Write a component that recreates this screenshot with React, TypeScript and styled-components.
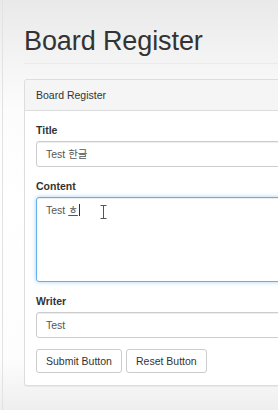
import React from "react";
import styled, { createGlobalStyle } from "styled-components";

const Global = createGlobalStyle`
  html, body { margin: 0; padding: 0; }
  body {
    width: 278px;
    height: 410px;
    overflow: hidden;
    font-family: "Liberation Sans", Arial, "Noto Sans CJK KR", sans-serif;
    color: #333;
    background: linear-gradient(to bottom, #e9e9e9 0px, #f4f4f4 60px, #fcfcfc 110px, #ffffff 200px, #fdfdfd 360px, #eeeeee 410px);
  }
`;

const Page = styled.div`
  height: 410px;
  box-sizing: border-box;
  border-left: 1px solid #e2e2e2;
  margin-left: 2px;
  padding: 24px 0 0 21px;
  width: 360px;
`;

const Title = styled.h1`
  margin: 0;
  font-size: 27px;
  font-weight: 400;
  line-height: 34px;
  color: #333;
  letter-spacing: -0.1px;
`;

const Rule = styled.div`
  height: 1px;
  background: #eaeaea;
  margin: 5px 0 15px;
`;

const Panel = styled.div`
  border: 1px solid #ddd;
  border-radius: 3px;
  background: #fff;
  box-shadow: 0 1px 1px rgba(0, 0, 0, 0.05);
`;

const PanelHeading = styled.div`
  background: #f5f5f5;
  border-bottom: 1px solid #ddd;
  padding: 0 11px;
  height: 30px;
  line-height: 30px;
  font-size: 10.5px;
  color: #333;
  border-radius: 3px 3px 0 0;
`;

const PanelBody = styled.div`
  padding: 12px 11px 12px;
`;

const Group = styled.div<{ $gap?: number }>`
  margin-bottom: ${(p) => p.$gap ?? 12}px;
`;

const Label = styled.label`
  display: block;
  font-size: 10.5px;
  font-weight: 700;
  line-height: 15px;
  margin-bottom: 3px;
  color: #333;
`;

const Input = styled.div`
  box-sizing: border-box;
  height: 26px;
  border: 1px solid #ccc;
  border-radius: 3px;
  padding: 0 9px;
  font-size: 10.5px;
  line-height: 24px;
  color: #555;
  box-shadow: inset 0 1px 1px rgba(0, 0, 0, 0.075);
`;

const TextArea = styled.div`
  position: relative;
  box-sizing: border-box;
  height: 85px;
  border: 1px solid #66afe9;
  border-radius: 3px;
  padding: 5px 9px;
  font-size: 10.5px;
  line-height: 15px;
  color: #555;
  box-shadow: inset 0 1px 1px rgba(0, 0, 0, 0.075), 0 0 4px rgba(102, 175, 233, 0.6);
`;

const Composing = styled.span`
  text-decoration: underline;
`;

const Caret = styled.span`
  display: inline-block;
  width: 1px;
  height: 12px;
  background: #333;
  vertical-align: -2px;
  margin-left: 1px;
`;

const Cursor = styled.svg`
  position: absolute;
  left: 63px;
  top: 7px;
`;

const Buttons = styled.div`
  display: flex;
  gap: 4px;
`;

const Button = styled.button`
  box-sizing: border-box;
  height: 24px;
  padding: 0 9px;
  border: 1px solid #ccc;
  border-radius: 3px;
  background: #fff;
  font-family: inherit;
  font-size: 10.5px;
  color: #333;
`;

export default function App() {
  return (
    <>
      <Global />
      <Page>
        <Title>Board Register</Title>
        <Rule />
        <Panel>
          <PanelHeading>Board Register</PanelHeading>
          <PanelBody>
            <Group>
              <Label>Title</Label>
              <Input>Test 한글</Input>
            </Group>
            <Group>
              <Label>Content</Label>
              <TextArea>
                Test <Composing>ㅎ</Composing>
                <Caret />
                <Cursor width="7" height="14" viewBox="0 0 7 14">
                  <path d="M0.5 0.5h6M3.5 0.5v13M0.5 13.5h6" stroke="#555" strokeWidth="1" fill="none" />
                </Cursor>
              </TextArea>
            </Group>
            <Group $gap={11}>
              <Label>Writer</Label>
              <Input>Test</Input>
            </Group>
            <Buttons>
              <Button>Submit Button</Button>
              <Button>Reset Button</Button>
            </Buttons>
          </PanelBody>
        </Panel>
      </Page>
    </>
  );
}
